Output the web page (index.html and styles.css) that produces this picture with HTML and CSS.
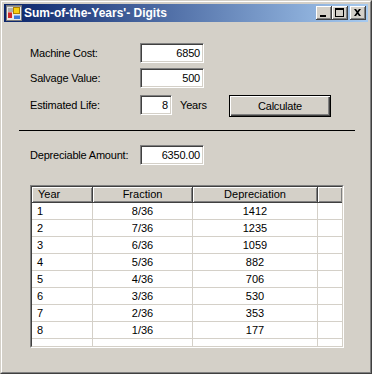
FILE: index.html
```html
<!DOCTYPE html>
<html>
<head>
<meta charset="utf-8">
<link rel="stylesheet" href="styles.css">
</head>
<body>
<div class="window">
  <div class="frame">
    <div class="titlebar">
      <svg class="app-icon" width="16" height="16" viewBox="0 0 16 16">
        <rect x="0.5" y="0.5" width="15" height="15" fill="#e8e8e8" stroke="#7a7a7a"/>
        <rect x="1" y="1" width="14" height="1" fill="#9a9a9a"/>
        <rect x="2" y="3" width="5" height="4" fill="#b0b0b0"/>
        <rect x="7.5" y="2.5" width="6" height="6" fill="#f8d010" stroke="#b08000"/>
        <rect x="2" y="7" width="4" height="6" fill="#d02828"/>
        <rect x="2" y="7" width="4" height="1" fill="#f07070"/>
        <rect x="8" y="10" width="6" height="4" fill="#3c78d8"/>
        <rect x="8" y="10" width="6" height="1" fill="#8ab4f0"/>
      </svg>
      <span class="title">Sum-of-the-Years'- Digits</span>
      <div class="tb-buttons">
        <div class="tb-btn">
          <svg width="16" height="14" viewBox="0 0 16 14"><rect x="4" y="9" width="6" height="2" fill="#000"/></svg>
        </div>
        <div class="tb-btn">
          <svg width="16" height="14" viewBox="0 0 16 14"><path d="M3 2h9v9H3z M4 4v6h7V4z" fill="#000" fill-rule="evenodd"/></svg>
        </div>
        <div class="tb-btn close">
          <svg width="16" height="14" viewBox="0 0 16 14"><path d="M4 3h2l1.5 2 1.5-2h2l-2.5 3.5L11 10H9L7.5 8 6 10H4l2.5-3.5z" fill="#000"/></svg>
        </div>
      </div>
    </div>
    <div class="client">
      <div class="form">
        <div class="row">
          <span class="label">Machine Cost:</span>
          <div class="textbox wide">6850</div>
        </div>
        <div class="row r2">
          <span class="label">Salvage Value:</span>
          <div class="textbox wide">500</div>
        </div>
        <div class="row r3">
          <span class="label">Estimated Life:</span>
          <div class="textbox narrow">8</div>
          <span class="years">Years</span>
          <div class="button">Calculate</div>
        </div>
      </div>
      <div class="rule"></div>
      <div class="form">
        <div class="row dep">
          <span class="label">Depreciable Amount:</span>
          <div class="textbox wide">6350.00</div>
        </div>
      </div>
      <div class="listview">
        <div class="lv-inner">
          <div class="lv-header">
            <div class="hcell left">Year</div>
            <div class="hcell">Fraction</div>
            <div class="hcell">Depreciation</div>
            <div class="hcell filler"></div>
          </div>
          <div class="lv-row"><div class="cell left">1</div><div class="cell">8/36</div><div class="cell">1412</div><div class="cell"></div></div>
          <div class="lv-row"><div class="cell left">2</div><div class="cell">7/36</div><div class="cell">1235</div><div class="cell"></div></div>
          <div class="lv-row"><div class="cell left">3</div><div class="cell">6/36</div><div class="cell">1059</div><div class="cell"></div></div>
          <div class="lv-row"><div class="cell left">4</div><div class="cell">5/36</div><div class="cell">882</div><div class="cell"></div></div>
          <div class="lv-row"><div class="cell left">5</div><div class="cell">4/36</div><div class="cell">706</div><div class="cell"></div></div>
          <div class="lv-row"><div class="cell left">6</div><div class="cell">3/36</div><div class="cell">530</div><div class="cell"></div></div>
          <div class="lv-row"><div class="cell left">7</div><div class="cell">2/36</div><div class="cell">353</div><div class="cell"></div></div>
          <div class="lv-row"><div class="cell left">8</div><div class="cell">1/36</div><div class="cell">177</div><div class="cell"></div></div>
          <div class="lv-row empty"><div class="cell"></div><div class="cell"></div><div class="cell"></div><div class="cell"></div></div>
        </div>
      </div>
    </div>
  </div>
</div>
</body>
</html>
```

FILE: styles.css
```css
html, body {
  margin: 0;
  padding: 0;
  background: #d4d0c8;
}
body {
  font-family: "Liberation Sans", Arial, sans-serif;
  font-size: 11px;
  color: #000;
}
.window {
  width: 372px;
  height: 374px;
  box-sizing: border-box;
  border: 1px solid;
  border-color: #d4d0c8 #404040 #404040 #d4d0c8;
  background: #d4d0c8;
}
.frame {
  height: 100%;
  box-sizing: border-box;
  border: 1px solid;
  border-color: #fff #808080 #808080 #fff;
  padding: 2px;
  display: flex;
  flex-direction: column;
}
.titlebar {
  height: 18px;
  flex: none;
  display: flex;
  align-items: center;
  background: linear-gradient(to right, #0a246a, #a6caf0);
  color: #fff;
}
.app-icon {
  margin-left: 2px;
  flex: none;
}
.title {
  margin-left: 2px;
  font-weight: bold;
  font-size: 12px;
  white-space: nowrap;
}
.tb-buttons {
  margin-left: auto;
  margin-right: 2px;
  display: flex;
}
.tb-btn {
  width: 16px;
  height: 14px;
  background: #d4d0c8;
  box-shadow: inset -1px -1px #404040, inset 1px 1px #fff, inset -2px -2px #808080, inset 2px 2px #d4d0c8;
}
.tb-btn svg {
  display: block;
}
.tb-btn.close {
  margin-left: 2px;
}
.client {
  flex: 1;
  padding-top: 21px;
}
.form {
  margin-left: 26px;
  letter-spacing: -0.2px;
}
.row {
  display: flex;
  align-items: flex-start;
  height: 20px;
}
.row.r2 {
  margin-top: 5px;
}
.row.r3 {
  margin-top: 7px;
  height: 22px;
}
.label {
  width: 110px;
  line-height: 20px;
  flex: none;
}
.textbox {
  height: 20px;
  box-sizing: border-box;
  border: 1px solid;
  border-color: #808080 #fff #fff #808080;
  box-shadow: inset 1px 1px #404040, inset -1px -1px #d4d0c8;
  background: #fff;
  text-align: right;
  padding-right: 3px;
  line-height: 18px;
}
.textbox.wide {
  width: 64px;
}
.textbox.narrow {
  width: 32px;
}
.years {
  margin-left: 8px;
  width: 49px;
  line-height: 20px;
}
.button {
  width: 102px;
  height: 22px;
  box-sizing: border-box;
  border: 1px solid #000;
  background: #d4d0c8;
  box-shadow: inset 1px 1px #fff, inset -1px -1px #404040, inset -2px -2px #808080;
  text-align: center;
  line-height: 20px;
}
.rule {
  margin-top: 13px;
  margin-left: 15px;
  width: 336px;
  height: 1px;
  background: #000;
}
.row.dep {
  margin-top: 14px;
}
.listview {
  margin-top: 20px;
  margin-left: 26px;
  width: 314px;
  height: 163px;
  box-sizing: border-box;
  border: 1px solid;
  border-color: #808080 #fff #fff #808080;
}
.lv-inner {
  height: 100%;
  box-sizing: border-box;
  border: 1px solid;
  border-color: #404040 #d4d0c8 #d4d0c8 #404040;
  background: #fff;
  overflow: hidden;
}
.lv-header,
.lv-row {
  display: grid;
  grid-template-columns: 61px 100px 125px 24px;
}
.hcell {
  height: 16px;
  box-sizing: border-box;
  background: #d4d0c8;
  border-right: 1px solid #404040;
  border-bottom: 1px solid #404040;
  box-shadow: inset 1px 1px #fff, inset -1px -1px #808080;
  text-align: center;
  line-height: 15px;
  white-space: nowrap;
}
.hcell.left {
  text-align: left;
  padding-left: 6px;
}
.hcell.filler {
  border-right: none;
}
.cell {
  height: 17px;
  box-sizing: border-box;
  border-right: 1px solid #d4d0c8;
  border-bottom: 1px solid #d4d0c8;
  text-align: center;
  line-height: 16px;
  white-space: nowrap;
}
.cell.left {
  text-align: left;
  padding-left: 5px;
}
.lv-row .cell:last-child {
  border-right: none;
}
.lv-row.empty .cell {
  height: 7px;
  border-bottom: none;
}
```
